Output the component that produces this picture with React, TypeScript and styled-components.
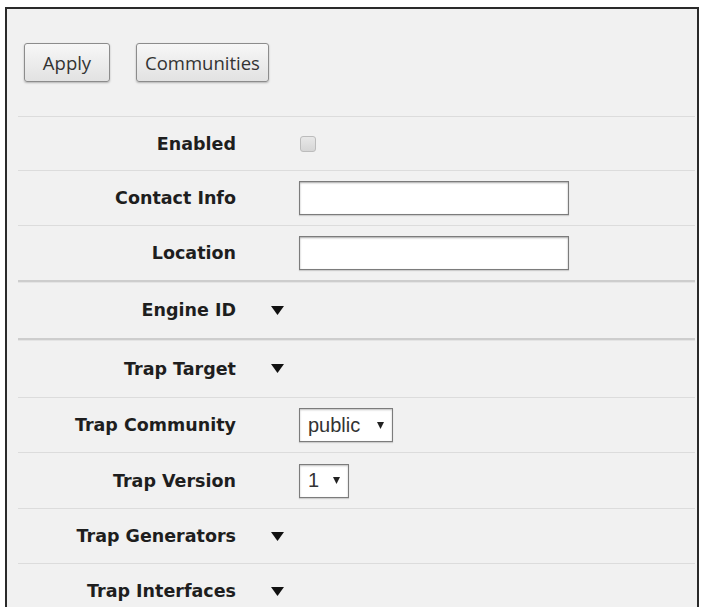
import React from 'react';
import styled, { createGlobalStyle } from 'styled-components';

const GlobalStyle = createGlobalStyle`
  html, body {
    margin: 0;
    padding: 0;
    background: #ffffff;
  }
  body {
    font-family: "DejaVu Sans", Verdana, sans-serif;
  }
`;

const Frame = styled.div`
  margin: 7px 2px 0 5px;
  border: 2px solid #2a2a2a;
  border-bottom: none;
  background: #f1f1f1;
  min-height: 600px;
  padding: 0 2px 0 11px;
  box-sizing: border-box;
`;

const Toolbar = styled.div`
  display: flex;
  gap: 26px;
  padding: 34px 0 34px 6px;
`;

const ToolButton = styled.button<{ $width: number }>`
  width: ${p => p.$width}px;
  height: 39px;
  padding: 0;
  border: 1px solid #8c8c8c;
  border-radius: 3px;
  background: linear-gradient(#f7f7f7, #e2e2e2);
  box-shadow: 0 1px 2px rgba(0, 0, 0, 0.25);
  font-family: "Open Sans", "DejaVu Sans", sans-serif;
  font-size: 18.5px;
  color: #333;
  cursor: pointer;
`;

const Row = styled.div<{ $section?: boolean; $height: number }>`
  display: flex;
  align-items: center;
  height: ${p => p.$height}px;
  border-top: ${p => (p.$section ? '2px solid #cdcdcd' : '1px solid #dcdcdc')};
  box-shadow: ${p => (p.$section ? 'inset 0 1px 0 #e4e4e4' : 'none')};
`;

const Label = styled.div`
  width: 218px;
  flex-shrink: 0;
  text-align: right;
  font-weight: bold;
  font-size: 17.5px;
  color: #1e1e1e;
`;

const Value = styled.div<{ $toggle?: boolean }>`
  display: flex;
  align-items: center;
  padding-left: ${p => (p.$toggle ? 35 : 63)}px;
`;

const Check = styled.span`
  width: 14px;
  height: 14px;
  margin: 0 0 0 1px;
  border: 1px solid #bcbcbc;
  border-radius: 3px;
  background: linear-gradient(#e8e8e8, #d6d6d6);
`;

const TextField = styled.input`
  width: 270px;
  height: 34px;
  box-sizing: border-box;
  border: 1px solid #7c7c7c;
  background: #fff;
  box-shadow: inset 0 1px 2px rgba(0, 0, 0, 0.35), 0 1px 1px rgba(0, 0, 0, 0.15);
  font-family: "Liberation Sans", Arial, sans-serif;
  font-size: 15px;
  padding: 0 6px;
  outline: none;
`;

const SelectBox = styled.div<{ $width: number; $gap: number }>`
  width: ${p => p.$width}px;
  height: 34px;
  box-sizing: border-box;
  display: flex;
  align-items: center;
  gap: ${p => p.$gap}px;
  padding: 0 0 0 8px;
  border: 1px solid #7c7c7c;
  background: #fff;
  box-shadow: inset 0 1px 2px rgba(0, 0, 0, 0.25), 0 1px 1px rgba(0, 0, 0, 0.15);
  font-family: "Liberation Sans", Arial, sans-serif;
  font-size: 20px;
  color: #333;
`;

const Caret = ({ size }: { size: 'small' | 'large' }) =>
  size === 'large' ? (
    <svg width="13" height="9" viewBox="0 0 13 9">
      <polygon points="0,0 13,0 6.5,9" fill="#111" />
    </svg>
  ) : (
    <svg width="7" height="7" viewBox="0 0 7 7">
      <polygon points="0,0 7,0 3.5,7" fill="#222" />
    </svg>
  );

const App: React.FC = () => {
  return (
    <>
      <GlobalStyle />
      <Frame>
        <Toolbar>
          <ToolButton $width={86}>Apply</ToolButton>
          <ToolButton $width={133}>Communities</ToolButton>
        </Toolbar>

        <Row $height={53}>
          <Label>Enabled</Label>
          <Value><Check /></Value>
        </Row>
        <Row $height={54}>
          <Label>Contact Info</Label>
          <Value><TextField /></Value>
        </Row>
        <Row $height={54}>
          <Label>Location</Label>
          <Value><TextField /></Value>
        </Row>

        <Row $section $height={56}>
          <Label>Engine ID</Label>
          <Value $toggle><Caret size="large" /></Value>
        </Row>

        <Row $section $height={57}>
          <Label>Trap Target</Label>
          <Value $toggle><Caret size="large" /></Value>
        </Row>
        <Row $height={54}>
          <Label>Trap Community</Label>
          <Value>
            <SelectBox $width={94} $gap={17}>public<Caret size="small" /></SelectBox>
          </Value>
        </Row>
        <Row $height={55}>
          <Label>Trap Version</Label>
          <Value>
            <SelectBox $width={50} $gap={14}>1<Caret size="small" /></SelectBox>
          </Value>
        </Row>
        <Row $height={54}>
          <Label>Trap Generators</Label>
          <Value $toggle><Caret size="large" /></Value>
        </Row>
        <Row $height={54}>
          <Label>Trap Interfaces</Label>
          <Value $toggle><Caret size="large" /></Value>
        </Row>
      </Frame>
    </>
  );
};

export default App;
